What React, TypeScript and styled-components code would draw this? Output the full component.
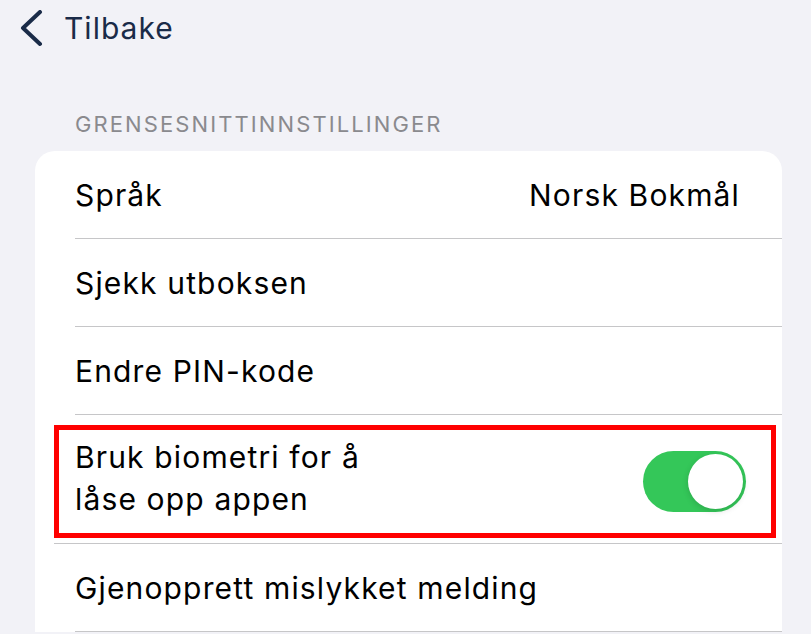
import React from "react";
import styled, { createGlobalStyle } from "styled-components";

const Global = createGlobalStyle`
  html, body { margin: 0; padding: 0; background: #f2f2f7; }
  body { font-family: Inter, "Noto Sans", "Liberation Sans", sans-serif; -webkit-font-smoothing: antialiased; }
`;

const Page = styled.div`
  width: 811px;
  height: 634px;
  overflow: hidden;
  background: #f2f2f7;
  display: flex;
  flex-direction: column;
`;

const NavBar = styled.div`
  height: 58px;
  display: flex;
  align-items: center;
  gap: 20px;
  padding-left: 20px;
  color: #1a2b48;
`;

const BackLabel = styled.span`
  font-size: 30px;
  font-weight: 400;
  letter-spacing: 1px;
  margin-top: -2px;
`;

const SectionTitle = styled.div`
  margin: 53px 0 0 75px;
  height: 40px;
  font-size: 22px;
  line-height: 26px;
  color: #8a8a8e;
  letter-spacing: 2.1px;
`;

const Card = styled.div`
  margin-left: 35px;
  width: 747px;
  background: #fff;
  border-radius: 20px 20px 0 0;
  display: flex;
  flex-direction: column;
`;

const Row = styled.div`
  height: 88px;
  box-sizing: border-box;
  padding: 0 42px 0 0;
  margin-left: 40px;
  border-bottom: 1px solid #c6c6c8;
  display: flex;
  align-items: center;
  justify-content: space-between;
  font-size: 30px;
  letter-spacing: 1.15px;
  color: #000;
`;

const HighlightRow = styled.div`
  height: 129px;
  border-bottom: 1px solid #c6c6c8;
  box-sizing: border-box;
  padding: 10px 6px 5px 0;
  margin-left: 19px;
  display: flex;
`;

const Highlight = styled.div`
  flex: 1;
  border: 5px solid #ff0000;
  display: flex;
  align-items: center;
  justify-content: space-between;
  padding: 0 25px 0 16px;
  font-size: 30px;
  letter-spacing: 1.15px;
  color: #000;
`;

const WrapLabel = styled.span`
  max-width: 310px;
  line-height: 42px;
  margin-top: -8px;
`;

const Toggle = styled.div<{ $on: boolean }>`
  width: 103px;
  height: 61px;
  border-radius: 31px;
  background: ${(p) => (p.$on ? "#34c759" : "#e9e9ea")};
  position: relative;
  flex-shrink: 0;
`;

const Knob = styled.div`
  position: absolute;
  right: 3px;
  top: 3px;
  width: 55px;
  height: 55px;
  border-radius: 50%;
  background: #fff;
  box-shadow: 0 2px 6px rgba(0, 0, 0, 0.15);
`;

const Value = styled.span`
  color: #000;
`;

export default function App() {
  return (
    <Page>
      <Global />
      <NavBar>
        <svg width="24" height="38" viewBox="0 0 24 38">
          <path d="M20 2 L3 18 L20 34" fill="none" stroke="#1a2b48" strokeWidth="4" strokeLinecap="round" strokeLinejoin="round" />
        </svg>
        <BackLabel>Tilbake</BackLabel>
      </NavBar>
      <SectionTitle>GRENSESNITTINNSTILLINGER</SectionTitle>
      <Card>
        <Row>
          <span>Språk</span>
          <Value>Norsk Bokmål</Value>
        </Row>
        <Row>
          <span>Sjekk utboksen</span>
        </Row>
        <Row>
          <span>Endre PIN-kode</span>
        </Row>
        <HighlightRow>
          <Highlight>
            <WrapLabel>Bruk biometri for å låse opp appen</WrapLabel>
            <Toggle $on>
              <Knob />
            </Toggle>
          </Highlight>
        </HighlightRow>
        <Row>
          <span>Gjenopprett mislykket melding</span>
        </Row>
      </Card>
    </Page>
  );
}
